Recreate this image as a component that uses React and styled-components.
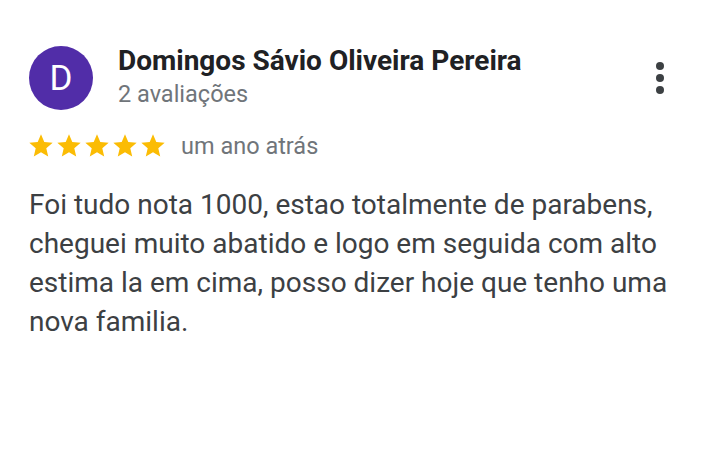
import React from 'react'
import styled, { createGlobalStyle } from 'styled-components'

const Global = createGlobalStyle`
  body {
    margin: 0;
    background: #fff;
    font-family: Roboto, "Liberation Sans", sans-serif;
  }
`

const Card = styled.article`
  width: 719px;
  height: 459px;
  box-sizing: border-box;
  padding: 46px 24px 0 29px;
`

const Header = styled.header`
  display: flex;
  align-items: flex-start;
  padding-right: 30px;
`

const Avatar = styled.div`
  width: 64px;
  height: 64px;
  border-radius: 50%;
  background: #512da8;
  color: #fff;
  display: flex;
  align-items: center;
  justify-content: center;
  font-size: 35px;
  flex-shrink: 0;
`

const Who = styled.div`
  flex: 1;
  margin-left: 25px;
`

const Name = styled.div`
  font-size: 28px;
  font-weight: 700;
  color: #202124;
  line-height: 32px;
  margin-top: -1px;
`

const Sub = styled.div`
  font-size: 23.5px;
  color: #70757a;
  line-height: 34px;
`

const MenuButton = styled.button`
  border: 0;
  background: none;
  padding: 0;
  margin: 16px 0 0;
  width: 10px;
  height: 32px;
  display: flex;
  flex-direction: column;
  align-items: center;
  justify-content: space-between;
`

const Dot = styled.span`
  width: 8px;
  height: 8px;
  border-radius: 50%;
  background: #3c4043;
`

const Meta = styled.div`
  display: flex;
  align-items: center;
  margin-top: 21px;
`

const Stars = styled.div`
  display: flex;
  margin-left: -2px;
`

const When = styled.span`
  margin-left: 14px;
  font-size: 23.5px;
  color: #70757a;
`

const Body = styled.p`
  margin: 25px 0 0;
  font-size: 28px;
  line-height: 39px;
  color: #3c4043;
`

const Star = () => (
  <svg width="28" height="28" viewBox="0 0 24 24">
    <path fill="#fbbc04" d="M12 17.27L18.18 21l-1.64-7.03L22 9.24l-7.19-.61L12 2 9.19 8.63 2 9.24l5.46 4.73L5.820 21z" />
  </svg>
)

export default function App() {
  return (
    <Card>
      <Global />
      <Header>
        <Avatar>D</Avatar>
        <Who>
          <Name>Domingos Sávio Oliveira Pereira</Name>
          <Sub>2 avaliações</Sub>
        </Who>
        <MenuButton aria-label="Mais opções">
          <Dot /><Dot /><Dot />
        </MenuButton>
      </Header>
      <Meta>
        <Stars>
          {[0, 1, 2, 3, 4].map(i => <Star key={i} />)}
        </Stars>
        <When>um ano atrás</When>
      </Meta>
      <Body>
        Foi tudo nota 1000, estao totalmente de parabens, cheguei muito abatido e logo em seguida com alto estima la em cima, posso dizer hoje que tenho uma nova familia.
      </Body>
    </Card>
  )
}
